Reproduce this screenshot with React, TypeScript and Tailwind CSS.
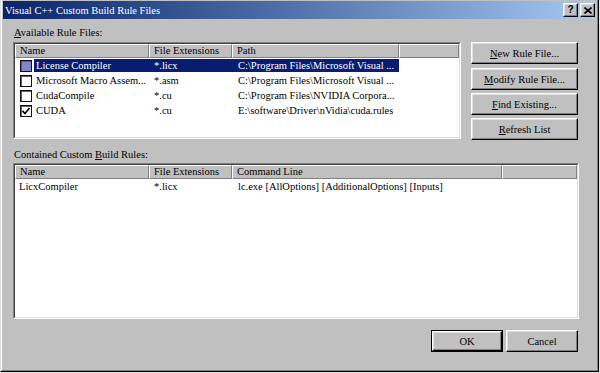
import type { ReactNode } from 'react';

const raised =
  'border border-t-white border-l-white border-r-black border-b-black shadow-[inset_-1px_-1px_0_#808080,inset_1px_1px_0_#dfdfdf] bg-[#c0c0c0]';

function U({ c }: { c: string }) {
  return <span className="underline underline-offset-[1px]">{c}</span>;
}

function Button({ children, w = 'w-[107px]', isDefault = false }: { children: ReactNode; w?: string; isDefault?: boolean }) {
  if (isDefault) {
    return (
      <div className={`${w} h-[22px] border border-black flex`}>
        <div className={`${raised} flex-1 flex items-center justify-center leading-[13px]`}>{children}</div>
      </div>
    );
  }
  return <div className={`${w} h-[22px] ${raised} flex items-center justify-center leading-[13px]`}>{children}</div>;
}

function HeaderCell({ w, label }: { w: string; label?: string }) {
  return (
    <div
      className={`${w} h-full shrink-0 border border-t-white border-l-white border-r-[#808080] border-b-[#808080] bg-[#c0c0c0] pl-[4px] flex items-center leading-[12px] whitespace-nowrap`}
    >
      {label}
    </div>
  );
}

function Checkbox({ checked = false, selected = false }: { checked?: boolean; selected?: boolean }) {
  return (
    <div
      className={`w-[12px] h-[12px] shrink-0 border border-[#101010] shadow-[inset_1px_1px_0_#606060] flex items-center justify-center ${
        selected ? 'bg-[#8484c8]' : 'bg-white'
      }`}
    >
      {checked && (
        <svg width="10" height="10" viewBox="0 0 10 10">
          <polyline points="1.5,4.8 4,7.5 8.5,2" fill="none" stroke="#000" strokeWidth="1.7" />
        </svg>
      )}
    </div>
  );
}

type RuleFile = { name: string; ext: string; path: string; checked?: boolean; selected?: boolean };

const ruleFiles: RuleFile[] = [
  { name: 'License Compiler', ext: '*.licx', path: 'C:\\Program Files\\Microsoft Visual ...', selected: true },
  { name: 'Microsoft Macro Assem...', ext: '*.asm', path: 'C:\\Program Files\\Microsoft Visual ...' },
  { name: 'CudaCompile', ext: '*.cu', path: 'C:\\Program Files\\NVIDIA Corpora...' },
  { name: 'CUDA', ext: '*.cu', path: 'E:\\software\\Driver\\nVidia\\cuda.rules', checked: true },
];

function Sunken({ className, children }: { className: string; children: ReactNode }) {
  return (
    <div className={`${className} border border-t-[#808080] border-l-[#808080] border-r-white border-b-white flex`}>
      <div className="flex-1 border border-t-[#404040] border-l-[#404040] border-r-[#dfdfdf] border-b-[#dfdfdf] bg-white flex flex-col overflow-hidden">
        {children}
      </div>
    </div>
  );
}

export default function App() {
  return (
    <div className="w-[600px] h-[373px] bg-[#e4e4e4] font-['Liberation_Serif',serif] text-[10.5px] text-black">
      <div className="w-[599px] h-[372px] border border-t-0 border-l-[#dfdfdf] border-r-black border-b-black">
        <div className="h-full border border-t-0 border-l-white border-r-[#808080] border-b-[#808080] bg-[#c0c0c0] px-[1px] pt-[1px] flex flex-col">
          {/* caption */}
          <div className="h-[18px] flex items-center bg-linear-to-r from-[#0a246a] to-[#a6caf0] pl-[2px]">
            <span className="text-white text-[10.5px] leading-[13px] whitespace-nowrap">Visual C++ Custom Build Rule Files</span>
            <div className="ml-auto mr-[1px] flex gap-[2px]">
              <div className={`w-[15px] h-[14px] ${raised} flex items-center justify-center font-['Liberation_Sans',sans-serif] font-bold text-[10px] leading-none`}>
                ?
              </div>
              <div className={`w-[15px] h-[14px] ${raised} flex items-center justify-center`}>
                <svg width="8" height="7" viewBox="0 0 8 7">
                  <path d="M0.5 0.5 L7.5 6.5 M7.5 0.5 L0.5 6.5" stroke="#000" strokeWidth="1.6" />
                </svg>
              </div>
            </div>
          </div>

          {/* body */}
          <div className="flex-1 flex flex-col pl-[10px] pr-[17px]">
            <div className="mt-[7px] ml-[1px] leading-[14px]">
              <U c="A" />vailable Rule Files:
            </div>

            <div className="mt-[2px] flex items-start gap-[10px]">
              <Sunken className="w-[448px] h-[97px]">
                <div className="h-[14px] flex shrink-0">
                  <HeaderCell w="w-[134px]" label="Name" />
                  <HeaderCell w="w-[83px]" label="File Extensions" />
                  <HeaderCell w="w-[167px]" label="Path" />
                  <HeaderCell w="flex-1" />
                </div>
                {ruleFiles.map((r) => (
                  <div key={r.name} className="h-[15px] flex items-center shrink-0">
                    <div className="pl-[5px] pr-[2px] flex items-center">
                      <Checkbox checked={r.checked} selected={r.selected} />
                    </div>
                    <div
                      className={`h-[13px] flex items-center whitespace-nowrap leading-[13px] ${
                        r.selected ? 'bg-[#081c72] text-white' : ''
                      }`}
                    >
                      <div className="w-[115px] pl-[2px] overflow-hidden">{r.name}</div>
                      <div className="w-[83px] pl-[5px]">{r.ext}</div>
                      <div className="w-[167px] pl-[6px] overflow-hidden">{r.path}</div>
                    </div>
                  </div>
                ))}
              </Sunken>

              <div className="w-[107px] flex flex-col">
                <Button>
                  <U c="N" />ew Rule File...
                </Button>
                <div className="mt-[4px]">
                  <Button>
                    <U c="M" />odify Rule File...
                  </Button>
                </div>
                <div className="mt-[3px]">
                  <Button>
                    <U c="F" />ind Existing...
                  </Button>
                </div>
                <div className="mt-[3px]">
                  <Button>
                    <U c="R" />efresh List
                  </Button>
                </div>
              </div>
            </div>

            <div className="mt-[8px] ml-[1px] leading-[14px]">
              Contained Custom <U c="B" />uild Rules:
            </div>

            <Sunken className="mt-[1px] w-[566px] h-[156px]">
              <div className="h-[14px] flex shrink-0">
                <HeaderCell w="w-[134px]" label="Name" />
                <HeaderCell w="w-[83px]" label="File Extensions" />
                <HeaderCell w="w-[270px]" label="Command Line" />
                <HeaderCell w="flex-1" />
              </div>
              <div className="h-[15px] flex items-center shrink-0 whitespace-nowrap leading-[13px]">
                <div className="w-[134px] pl-[4px]">LicxCompiler</div>
                <div className="w-[83px] pl-[5px]">*.licx</div>
                <div className="pl-[6px]">lc.exe [AllOptions] [AdditionalOptions] [Inputs]</div>
              </div>
            </Sunken>

            <div className="mt-[11px] mr-[1px] flex justify-end gap-[3px]">
              <Button w="w-[72px]" isDefault>
                OK
              </Button>
              <Button w="w-[72px]">Cancel</Button>
            </div>
          </div>
        </div>
      </div>
    </div>
  );
}
